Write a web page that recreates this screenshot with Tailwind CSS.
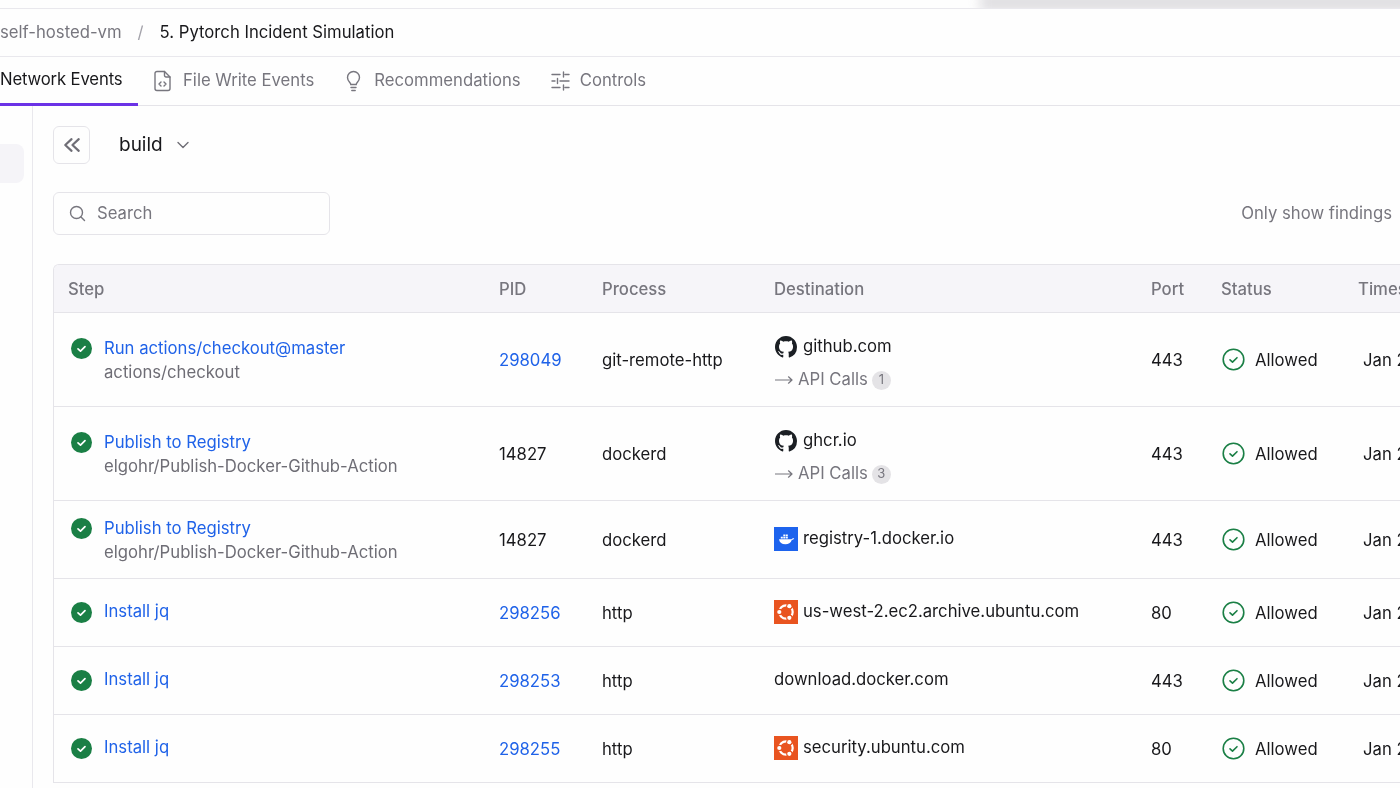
<!DOCTYPE html>
<html lang="en">
<head>
  <meta charset="UTF-8">
  <meta name="viewport" content="width=device-width, initial-scale=1.0">
  <title>Network Events</title>
  <script src="https://cdn.jsdelivr.net/npm/@tailwindcss/browser@4"></script>
</head>
<body class="bg-[#fefefe] text-[#18181b] font-['Inter',sans-serif] text-[16.7px]">
  <div class="relative h-[788px] w-[1400px] overflow-hidden blur-[0.3px]">
    <!-- menu edge peeking in from the top -->
    <div class="absolute top-0 left-0 h-[8px] w-full overflow-hidden">
      <div class="absolute top-[-8px] right-[-20px] h-[20px] w-[440px] bg-[#e0dfe2] blur-[6px]"></div>
    </div>

    <!-- Breadcrumb -->
    <div class="mt-[8px] h-[49px] flex items-center border-y border-[#e9e8ed]">
      <span class="text-[#77767e]">self-hosted-vm</span>
      <span class="ml-[16px] text-[#a3a2aa]">/</span>
      <span class="ml-[16px]">5. Pytorch Incident Simulation</span>
    </div>

    <!-- Tabs -->
    <div class="h-[49px] flex border-b border-[#e5e4e9] text-[#77767e]">
      <div class="h-[49px] w-[138px] flex items-center border-b-[3px] border-[#6b32e6] text-[#18181b] tracking-[-0.15px] whitespace-nowrap">Network Events</div>
      <div class="h-[47px] px-[15px] flex items-center gap-[11px]">
        <svg class="w-[19px] h-[22px]" viewBox="0 0 19 22" fill="none" stroke="#77767e" stroke-width="1.4" stroke-linejoin="round" stroke-linecap="round"><path d="M11.5 1.5H4a2 2 0 0 0-2 2v15a2 2 0 0 0 2 2h11a2 2 0 0 0 2-2V7z"/><path d="M11.5 1.5V5.5a1.5 1.5 0 0 0 1.5 1.5h4"/><path d="M8 12l-2 2 2 2M11 12l2 2-2 2"/></svg>
        <span>File Write Events</span>
      </div>
      <div class="h-[47px] pl-[16px] pr-[15px] flex items-center gap-[12px]">
        <svg class="w-[17px] h-[22px]" viewBox="0 0 17 22" fill="none" stroke="#77767e" stroke-width="1.4" stroke-linecap="round"><path d="M5.8 14.5c0-1.8-3.3-3.3-3.3-7a6 6 0 0 1 12 0c0 3.7-3.3 5.2-3.3 7z"/><path d="M6 17.5h5M6.800 20.5h3.400"/></svg>
        <span>Recommendations</span>
      </div>
      <div class="h-[47px] px-[15px] flex items-center gap-[10px]">
        <svg class="w-[19px] h-[20px]" viewBox="0 0 19 20" fill="none" stroke="#77767e" stroke-width="1.4" stroke-linecap="round"><path d="M1 3.5h8M14 3.5h4M12.5 1v5M1 10h3M9 10h9M6.500 7.500v5M1 16.500h8M14 16.500h4M12.500 14v5"/></svg>
        <span>Controls</span>
      </div>
    </div>

    <div class="flex h-[683px]">
      <!-- Steps sidebar, collapsed off screen -->
      <div class="w-[33px] shrink-0 border-r border-[#e9e8ed] pt-[38px]">
        <div class="h-[39px] w-[24px] rounded-r-lg bg-[#f5f4f8]"></div>
      </div>

      <div class="w-[1367px] pl-[20px] pt-[20px]">
        <div class="flex items-center">
          <button class="w-[37px] h-[38px] flex items-center justify-center rounded-md border border-[#e5e4e9]">
            <svg class="w-[18px] h-[18px]" viewBox="0 0 20 20" fill="none" stroke="#6f6e76" stroke-width="2.4" stroke-linecap="round" stroke-linejoin="round"><path d="M9.500 3.500L2.500 10l7 6.500M17.500 3.500L10.500 10l7 6.500"/></svg>
          </button>
          <span class="ml-[29px] text-[19px]">build</span>
          <svg class="ml-[13px] w-[14px] h-[14px]" viewBox="0 0 14 14" fill="none" stroke="#6f6e76" stroke-width="1.4" stroke-linecap="round" stroke-linejoin="round"><path d="M2 4.500l5 5 5-5"/></svg>
        </div>

        <div class="mt-[28px] w-[1339px] flex items-center justify-between">
          <div class="w-[277px] h-[43px] flex items-center rounded-md border border-[#e5e4e9] pl-[15px] text-[#77767e]">
            <svg class="w-[17px] h-[17px]" viewBox="0 0 17 17" fill="none" stroke="#77767e" stroke-width="1.4" stroke-linecap="round"><circle cx="7.500" cy="7.500" r="6"/><path d="M12 12l3.500 3.500"/></svg>
            <span class="ml-[11px]">Search</span>
          </div>
          <span class="text-[#77767e]">Only show findings</span>
        </div>

        <!-- Events table -->
        <div class="mt-[29px] w-[1500px] rounded-t-md border-l border-t border-[#e5e4e9] overflow-hidden">
          <table class="table-fixed w-full border-separate border-spacing-0 text-left">
            <colgroup>
              <col class="w-[430px]"><col class="w-[103px]"><col class="w-[172px]"><col class="w-[377px]"><col class="w-[70px]"><col class="w-[137px]"><col>
            </colgroup>
            <thead class="bg-[#f6f5f9] text-[#77767e]">
              <tr>
                <th class="h-[48px] pl-[14px] pt-[2px] font-medium border-b border-[#e5e4e9]">Step</th>
                <th class="pl-[15px] pt-[2px] font-medium border-b border-[#e5e4e9]">PID</th>
                <th class="pl-[15px] pt-[2px] font-medium border-b border-[#e5e4e9]">Process</th>
                <th class="pl-[15px] pt-[2px] font-medium border-b border-[#e5e4e9]">Destination</th>
                <th class="pl-[15px] pt-[2px] font-medium border-b border-[#e5e4e9]">Port</th>
                <th class="pl-[15px] pt-[2px] font-medium border-b border-[#e5e4e9]">Status</th>
                <th class="pl-[15px] pt-[2px] font-medium border-b border-[#e5e4e9]">Timestamp</th>
              </tr>
            </thead>
            <tbody>
              <tr>
                <td class="h-[94px] pl-[17px] border-b border-[#e5e4e9]">
                  <div class="flex gap-[12px]">
                    <svg class="w-[21px] h-[21px] mt-[2px] shrink-0" viewBox="0 0 21 21"><circle cx="10.500" cy="10.500" r="10.500" fill="#1a7f45"/><path d="M7 10.800l2.500 2.400 4.500-4.600" fill="none" stroke="#fff" stroke-width="1.7" stroke-linecap="round" stroke-linejoin="round"/></svg>
                    <div class="leading-[24px]">
                      <div class="text-[#1f62e8]">Run actions/checkout@master</div>
                      <div class="text-[#6e6d75]">actions/checkout</div>
                    </div>
                  </div>
                </td>
                <td class="pl-[15px] pt-[2px] border-b border-[#e5e4e9] text-[#1f62e8]">298049</td>
                <td class="pl-[15px] pt-[2px] border-b border-[#e5e4e9]">git-remote-http</td>
                <td class="pl-[15px] pt-[8px] border-b border-[#e5e4e9]">
                  <div class="flex items-center gap-[6px] h-[24px]">
                    <svg class="w-[22px] h-[22px] ml-[1px]" viewBox="0 0 16 16" fill="#1b1f24"><path d="M8 0C3.580 0 0 3.580 0 8c0 3.540 2.290 6.530 5.470 7.590.4.070.55-.17.55-.38 0-.19-.01-.82-.01-1.490-2.010.37-2.530-.49-2.690-.94-.09-.23-.48-.94-.82-1.130-.28-.15-.68-.52-.01-.53.63-.01 1.080.58 1.230.82.72 1.210 1.870.87 2.330.66.07-.52.28-.87.51-1.070-1.780-.2-3.640-.89-3.640-3.950 0-.87.31-1.590.82-2.150-.08-.2-.36-1.020.08-2.120 0 0 .67-.21 2.200.82.64-.18 1.320-.27 2-.27s1.360.09 2 .27c1.530-1.040 2.200-.82 2.200-.82.44 1.100.16 1.920.08 2.120.51.56.82 1.270.82 2.150 0 3.070-1.870 3.750-3.650 3.950.29.25.54.73.54 1.480 0 1.070-.01 1.930-.01 2.200 0 .21.15.46.55.38A8.013 8.013 0 0016 8c0-4.420-3.580-8-8-8z"/></svg>
                    <span>github.com</span>
                  </div>
                  <div class="flex items-center mt-[9px] h-[24px] text-[#77767e]">
                    <svg class="w-[18px] h-[10px] ml-[1px] mr-[5px]" viewBox="0 0 18 10" fill="none" stroke="#77767e" stroke-width="1.2" stroke-linecap="round" stroke-linejoin="round"><path d="M0.500 5h16.500M13.500 1.800L17 5l-3.500 3.200"/></svg>
                    <span>API Calls</span>
                    <span class="ml-[4px] w-[19px] h-[19px] rounded-full bg-[#e4e3e6] text-[13px] flex items-center justify-center">1</span>
                  </div>
                </td>
                <td class="pl-[15px] pt-[2px] border-b border-[#e5e4e9]">443</td>
                <td class="pl-[15px] border-b border-[#e5e4e9]">
                  <div class="flex items-center gap-[10px]">
                    <svg class="w-[23px] h-[23px] ml-[1px]" viewBox="0 0 23 23" fill="none" stroke="#1a7f45" stroke-width="1.6" stroke-linecap="round" stroke-linejoin="round"><circle cx="11.500" cy="11.500" r="10.300"/><path d="M8 11.800l2.500 2.300 4.500-4.400"/></svg>
                    <span class="pt-[2px]">Allowed</span>
                  </div>
                </td>
                <td class="pl-[20px] pt-[2px] border-b border-[#e5e4e9]">Jan 2</td>
              </tr>
              <tr>
                <td class="h-[94px] pl-[17px] border-b border-[#e5e4e9]">
                  <div class="flex gap-[12px]">
                    <svg class="w-[21px] h-[21px] mt-[2px] shrink-0" viewBox="0 0 21 21"><circle cx="10.500" cy="10.500" r="10.500" fill="#1a7f45"/><path d="M7 10.800l2.500 2.400 4.500-4.600" fill="none" stroke="#fff" stroke-width="1.7" stroke-linecap="round" stroke-linejoin="round"/></svg>
                    <div class="leading-[24px]">
                      <div class="text-[#1f62e8]">Publish to Registry</div>
                      <div class="text-[#6e6d75]">elgohr/Publish-Docker-Github-Action</div>
                    </div>
                  </div>
                </td>
                <td class="pl-[15px] pt-[2px] border-b border-[#e5e4e9]">14827</td>
                <td class="pl-[15px] pt-[2px] border-b border-[#e5e4e9]">dockerd</td>
                <td class="pl-[15px] pt-[8px] border-b border-[#e5e4e9]">
                  <div class="flex items-center gap-[6px] h-[24px]">
                    <svg class="w-[22px] h-[22px] ml-[1px]" viewBox="0 0 16 16" fill="#1b1f24"><path d="M8 0C3.580 0 0 3.580 0 8c0 3.540 2.290 6.530 5.470 7.590.4.070.55-.17.55-.38 0-.19-.01-.82-.01-1.490-2.010.37-2.530-.49-2.690-.94-.09-.23-.48-.94-.82-1.130-.28-.15-.68-.52-.01-.53.63-.01 1.080.58 1.230.82.72 1.210 1.870.87 2.330.66.07-.52.28-.87.51-1.070-1.780-.2-3.640-.89-3.640-3.950 0-.87.31-1.590.82-2.150-.08-.2-.36-1.020.08-2.120 0 0 .67-.21 2.200.82.64-.18 1.320-.27 2-.27s1.360.09 2 .27c1.530-1.040 2.200-.82 2.200-.82.44 1.100.16 1.920.08 2.120.51.56.82 1.270.82 2.150 0 3.070-1.870 3.750-3.650 3.950.29.25.54.73.54 1.480 0 1.070-.01 1.930-.01 2.200 0 .21.15.46.55.38A8.013 8.013 0 0016 8c0-4.420-3.580-8-8-8z"/></svg>
                    <span>ghcr.io</span>
                  </div>
                  <div class="flex items-center mt-[9px] h-[24px] text-[#77767e]">
                    <svg class="w-[18px] h-[10px] ml-[1px] mr-[5px]" viewBox="0 0 18 10" fill="none" stroke="#77767e" stroke-width="1.2" stroke-linecap="round" stroke-linejoin="round"><path d="M0.500 5h16.500M13.500 1.800L17 5l-3.500 3.200"/></svg>
                    <span>API Calls</span>
                    <span class="ml-[4px] w-[19px] h-[19px] rounded-full bg-[#e4e3e6] text-[13px] flex items-center justify-center">3</span>
                  </div>
                </td>
                <td class="pl-[15px] pt-[2px] border-b border-[#e5e4e9]">443</td>
                <td class="pl-[15px] border-b border-[#e5e4e9]">
                  <div class="flex items-center gap-[10px]">
                    <svg class="w-[23px] h-[23px] ml-[1px]" viewBox="0 0 23 23" fill="none" stroke="#1a7f45" stroke-width="1.6" stroke-linecap="round" stroke-linejoin="round"><circle cx="11.500" cy="11.500" r="10.300"/><path d="M8 11.800l2.500 2.300 4.500-4.400"/></svg>
                    <span class="pt-[2px]">Allowed</span>
                  </div>
                </td>
                <td class="pl-[20px] pt-[2px] border-b border-[#e5e4e9]">Jan 2</td>
              </tr>
              <tr>
                <td class="h-[78px] pl-[17px] border-b border-[#e5e4e9]">
                  <div class="flex gap-[12px]">
                    <svg class="w-[21px] h-[21px] mt-[2px] shrink-0" viewBox="0 0 21 21"><circle cx="10.500" cy="10.500" r="10.500" fill="#1a7f45"/><path d="M7 10.800l2.500 2.400 4.500-4.600" fill="none" stroke="#fff" stroke-width="1.7" stroke-linecap="round" stroke-linejoin="round"/></svg>
                    <div class="leading-[24px]">
                      <div class="text-[#1f62e8]">Publish to Registry</div>
                      <div class="text-[#6e6d75]">elgohr/Publish-Docker-Github-Action</div>
                    </div>
                  </div>
                </td>
                <td class="pl-[15px] pt-[2px] border-b border-[#e5e4e9]">14827</td>
                <td class="pl-[15px] pt-[2px] border-b border-[#e5e4e9]">dockerd</td>
                <td class="pl-[15px] pb-[2px] border-b border-[#e5e4e9]">
                  <div class="flex items-center gap-[5px] h-[24px]">
                    <svg class="w-[24px] h-[24px]" viewBox="0 0 24 24"><rect width="24" height="24" fill="#1d63ed"/><path d="M5 12.200h12.600c.5-1 1.600-1.300 2.600-.9-.4 1-1.300 1.600-2.400 1.600-1 3-3.500 4.300-6.300 4.300-3.700 0-6-1.800-6.500-5z" fill="#fff"/><path d="M6.800 9.800h2v1.800h-2zM9.300 9.800h2v1.800h-2zM11.800 9.800h2v1.800h-2zM9.300 7.500h2v1.800h-2zM11.800 7.500h2v1.800h-2z" fill="#fff"/></svg>
                    <span>registry-1.docker.io</span>
                  </div>
                </td>
                <td class="pl-[15px] pt-[2px] border-b border-[#e5e4e9]">443</td>
                <td class="pl-[15px] border-b border-[#e5e4e9]">
                  <div class="flex items-center gap-[10px]">
                    <svg class="w-[23px] h-[23px] ml-[1px]" viewBox="0 0 23 23" fill="none" stroke="#1a7f45" stroke-width="1.6" stroke-linecap="round" stroke-linejoin="round"><circle cx="11.500" cy="11.500" r="10.300"/><path d="M8 11.800l2.500 2.300 4.500-4.400"/></svg>
                    <span class="pt-[2px]">Allowed</span>
                  </div>
                </td>
                <td class="pl-[20px] pt-[2px] border-b border-[#e5e4e9]">Jan 2</td>
              </tr>
              <tr>
                <td class="h-[68px] pl-[17px] border-b border-[#e5e4e9]">
                  <div class="flex items-center gap-[12px]">
                    <svg class="w-[21px] h-[21px] shrink-0" viewBox="0 0 21 21"><circle cx="10.500" cy="10.500" r="10.500" fill="#1a7f45"/><path d="M7 10.800l2.500 2.400 4.500-4.600" fill="none" stroke="#fff" stroke-width="1.7" stroke-linecap="round" stroke-linejoin="round"/></svg>
                    <div class="pb-[2px] text-[#1f62e8]">Install jq</div>
                  </div>
                </td>
                <td class="pl-[15px] pt-[2px] border-b border-[#e5e4e9] text-[#1f62e8]">298256</td>
                <td class="pl-[15px] pt-[2px] border-b border-[#e5e4e9]">http</td>
                <td class="pl-[15px] pb-[2px] border-b border-[#e5e4e9]">
                  <div class="flex items-center gap-[5px] h-[24px]">
                    <svg class="w-[24px] h-[24px]" viewBox="0 0 24 24"><rect width="24" height="24" fill="#e95420"/><circle cx="12" cy="12" r="6.700" fill="none" stroke="#fff" stroke-width="2.200"/><circle cx="5.300" cy="12" r="3.200" fill="#e95420"/><circle cx="15.350" cy="6.200" r="3.200" fill="#e95420"/><circle cx="15.350" cy="17.800" r="3.200" fill="#e95420"/><circle cx="5.300" cy="12" r="2.100" fill="#fff"/><circle cx="15.350" cy="6.200" r="2.100" fill="#fff"/><circle cx="15.350" cy="17.800" r="2.100" fill="#fff"/></svg>
                    <span>us-west-2.ec2.archive.ubuntu.com</span>
                  </div>
                </td>
                <td class="pl-[15px] pt-[2px] border-b border-[#e5e4e9]">80</td>
                <td class="pl-[15px] border-b border-[#e5e4e9]">
                  <div class="flex items-center gap-[10px]">
                    <svg class="w-[23px] h-[23px] ml-[1px]" viewBox="0 0 23 23" fill="none" stroke="#1a7f45" stroke-width="1.6" stroke-linecap="round" stroke-linejoin="round"><circle cx="11.500" cy="11.500" r="10.300"/><path d="M8 11.800l2.500 2.300 4.500-4.400"/></svg>
                    <span class="pt-[2px]">Allowed</span>
                  </div>
                </td>
                <td class="pl-[20px] pt-[2px] border-b border-[#e5e4e9]">Jan 2</td>
              </tr>
              <tr>
                <td class="h-[68px] pl-[17px] border-b border-[#e5e4e9]">
                  <div class="flex items-center gap-[12px]">
                    <svg class="w-[21px] h-[21px] shrink-0" viewBox="0 0 21 21"><circle cx="10.500" cy="10.500" r="10.500" fill="#1a7f45"/><path d="M7 10.800l2.500 2.400 4.500-4.600" fill="none" stroke="#fff" stroke-width="1.7" stroke-linecap="round" stroke-linejoin="round"/></svg>
                    <div class="pb-[2px] text-[#1f62e8]">Install jq</div>
                  </div>
                </td>
                <td class="pl-[15px] pt-[2px] border-b border-[#e5e4e9] text-[#1f62e8]">298253</td>
                <td class="pl-[15px] pt-[2px] border-b border-[#e5e4e9]">http</td>
                <td class="pl-[15px] pb-[2px] border-b border-[#e5e4e9]">download.docker.com</td>
                <td class="pl-[15px] pt-[2px] border-b border-[#e5e4e9]">443</td>
                <td class="pl-[15px] border-b border-[#e5e4e9]">
                  <div class="flex items-center gap-[10px]">
                    <svg class="w-[23px] h-[23px] ml-[1px]" viewBox="0 0 23 23" fill="none" stroke="#1a7f45" stroke-width="1.6" stroke-linecap="round" stroke-linejoin="round"><circle cx="11.500" cy="11.500" r="10.300"/><path d="M8 11.800l2.500 2.300 4.500-4.400"/></svg>
                    <span class="pt-[2px]">Allowed</span>
                  </div>
                </td>
                <td class="pl-[20px] pt-[2px] border-b border-[#e5e4e9]">Jan 2</td>
              </tr>
              <tr>
                <td class="h-[68px] pl-[17px] border-b border-[#e5e4e9]">
                  <div class="flex items-center gap-[12px]">
                    <svg class="w-[21px] h-[21px] shrink-0" viewBox="0 0 21 21"><circle cx="10.500" cy="10.500" r="10.500" fill="#1a7f45"/><path d="M7 10.800l2.500 2.400 4.500-4.600" fill="none" stroke="#fff" stroke-width="1.7" stroke-linecap="round" stroke-linejoin="round"/></svg>
                    <div class="pb-[2px] text-[#1f62e8]">Install jq</div>
                  </div>
                </td>
                <td class="pl-[15px] pt-[2px] border-b border-[#e5e4e9] text-[#1f62e8]">298255</td>
                <td class="pl-[15px] pt-[2px] border-b border-[#e5e4e9]">http</td>
                <td class="pl-[15px] pb-[2px] border-b border-[#e5e4e9]">
                  <div class="flex items-center gap-[5px] h-[24px]">
                    <svg class="w-[24px] h-[24px]" viewBox="0 0 24 24"><rect width="24" height="24" fill="#e95420"/><circle cx="12" cy="12" r="6.700" fill="none" stroke="#fff" stroke-width="2.200"/><circle cx="5.300" cy="12" r="3.200" fill="#e95420"/><circle cx="15.350" cy="6.200" r="3.200" fill="#e95420"/><circle cx="15.350" cy="17.800" r="3.200" fill="#e95420"/><circle cx="5.300" cy="12" r="2.100" fill="#fff"/><circle cx="15.350" cy="6.200" r="2.100" fill="#fff"/><circle cx="15.350" cy="17.800" r="2.100" fill="#fff"/></svg>
                    <span>security.ubuntu.com</span>
                  </div>
                </td>
                <td class="pl-[15px] pt-[2px] border-b border-[#e5e4e9]">80</td>
                <td class="pl-[15px] border-b border-[#e5e4e9]">
                  <div class="flex items-center gap-[10px]">
                    <svg class="w-[23px] h-[23px] ml-[1px]" viewBox="0 0 23 23" fill="none" stroke="#1a7f45" stroke-width="1.6" stroke-linecap="round" stroke-linejoin="round"><circle cx="11.500" cy="11.500" r="10.300"/><path d="M8 11.800l2.500 2.300 4.500-4.400"/></svg>
                    <span class="pt-[2px]">Allowed</span>
                  </div>
                </td>
                <td class="pl-[20px] pt-[2px] border-b border-[#e5e4e9]">Jan 2</td>
              </tr>
            </tbody>
          </table>
        </div>
      </div>
    </div>
  </div>
</body>
</html>
